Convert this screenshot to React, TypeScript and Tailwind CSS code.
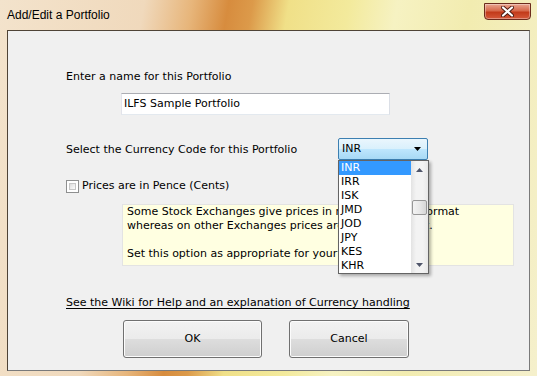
import React from "react";

const currencies = ["INR", "IRR", "ISK", "JMD", "JOD", "JPY", "KES", "KHR"];

const CloseButton: React.FC = () => (
  <div className="mt-[3px] mr-[6px] flex h-[17px] w-[47px] items-center justify-center rounded-b-[4px] border border-[#6b2b1c] bg-[linear-gradient(180deg,#e9a690_0%,#d6694b_45%,#c23a1a_55%,#d5593a_100%)] shadow-[inset_0_0_0_1px_rgba(255,255,255,0.35)]">
    <svg width="13" height="11" viewBox="0 0 13 11">
      <path d="M2 1.5 L11 9.5 M11 1.5 L2 9.5" stroke="#4a1a10" strokeWidth="4" strokeLinecap="round" />
      <path d="M2 1.5 L11 9.5 M11 1.5 L2 9.5" stroke="#ffffff" strokeWidth="2.2" strokeLinecap="round" />
    </svg>
  </div>
);

const Win7Button: React.FC<{ label: string; className?: string }> = ({ label, className = "" }) => (
  <div
    className={`flex h-[38px] items-center justify-center rounded-[3px] border border-[#707070] bg-[linear-gradient(180deg,#f2f2f2_0%,#ebebeb_50%,#dddddd_51%,#cfcfcf_100%)] shadow-[inset_0_0_0_1px_#fcfcfc] ${className}`}
  >
    <span className="text-[11px] leading-[14px] text-black">{label}</span>
  </div>
);

const ScrollArrow: React.FC<{ up?: boolean }> = ({ up }) => (
  <div className="flex h-[17px] w-full items-center justify-center">
    <svg width="7" height="4" viewBox="0 0 7 4">
      {up ? <path d="M0 4 L3.5 0 L7 4 Z" fill="#50566a" /> : <path d="M0 0 L3.5 4 L7 0 Z" fill="#50566a" />}
    </svg>
  </div>
);

const CurrencySelect: React.FC = () => (
  <div className="relative h-[22px] w-[90px]">
    <div className="flex h-full w-full items-center justify-between rounded-[2px] border border-[#3c7fb1] bg-[linear-gradient(180deg,#eaf6fd_0%,#d9f0fc_50%,#bee6fd_51%,#a7d9f5_100%)] pl-[3px] pr-[6px]">
      <span className="text-[11px] leading-[14px] text-black">INR</span>
      <svg width="7" height="4" viewBox="0 0 7 4">
        <path d="M0 0 L3.5 4 L7 0 Z" fill="#000" />
      </svg>
    </div>
    {/* open dropdown list */}
    <div className="absolute left-0 top-[22px] z-10 flex h-[114px] w-[91px] border border-[#646464] bg-white shadow-[2px_2px_3px_rgba(0,0,0,0.3)]">
      <div className="flex w-[73px] flex-col">
        {currencies.map((c, i) => (
          <div
            key={c}
            className={`h-[14px] pl-[2px] text-[11px] leading-[14px] ${i === 0 ? "bg-[#3399ff] text-white" : "text-black"}`}
          >
            {c}
          </div>
        ))}
      </div>
      <div className="flex w-[17px] flex-col items-center bg-[linear-gradient(90deg,#e3e3e3_0%,#f3f3f3_30%,#f3f3f3_70%,#e8e8e8_100%)]">
        <ScrollArrow up />
        <div className="mt-[22px] h-[15px] w-[15px] rounded-[2px] border border-[#979797] bg-[linear-gradient(90deg,#f3f3f3_0%,#e8e8e8_50%,#d6d6d6_100%)]" />
        <div className="flex-1" />
        <ScrollArrow />
      </div>
    </div>
  </div>
);

const App: React.FC = () => {
  return (
    <div className="relative h-[376px] w-[537px] overflow-hidden bg-[linear-gradient(100deg,#f3e3cc_0%,#f0d9bc_24%,#e7b57a_32%,#d78c3e_38%,#dc9a4a_42%,#f0e088_48%,#f3ea9c_58%,#f6f2c2_66%,#f2ecb0_78%,#f5f0cc_100%)]">
      {/* title bar */}
      <div className="flex h-[30px] items-start justify-between">
        <span className="pl-[7px] pt-[8px] font-['Liberation_Sans',sans-serif] text-[12px] leading-[14px] text-black">
          Add/Edit a Portfolio
        </span>
        <CloseButton />
      </div>

      {/* client area */}
      <div className="ml-[7px] h-[341px] w-[523px] border border-t-[#4f4336] border-l-[#4f4336] border-r-[#7a7a7a] border-b-[#7a7a7a] bg-[#f0f0f0] font-['DejaVu_Sans',sans-serif] text-[11px] leading-[14px] text-black">
        <div className="flex flex-col pt-[39px]">
          <div className="pl-[58px]">Enter a name for this Portfolio</div>

          <div className="ml-[113px] mt-[9px] flex h-[22px] w-[269px] items-center border border-[#abadb3] border-b-[#e3e9ef] border-l-[#e2e3ea] border-r-[#dbdfe6] bg-white pl-[2px]">
            ILFS Sample Portfolio
          </div>

          <div className="mt-[23px] flex h-[22px] items-center">
            <div className="w-[330px] pl-[58px] pt-[1px]">Select the Currency Code for this Portfolio</div>
            <CurrencySelect />
          </div>

          <div className="mt-[19px] flex items-center pl-[58px]">
            <div className="h-[13px] w-[13px] border border-[#8e8f8f] bg-white p-[2px]">
              <div className="h-full w-full border border-[#c6c6c6] bg-[linear-gradient(135deg,#dcdcdc_0%,#f0f0f0_60%,#fbfbfb_100%)]" />
            </div>
            <span className="ml-[3px]">Prices are in Pence (Cents)</span>
          </div>

          <div className="ml-[114px] mt-[11px] h-[62px] w-[392px] border border-[#e3e3e3] bg-[#ffffe1] pl-[4px]">
            <div>Some Stock Exchanges give prices in minor currency format</div>
            <div>whereas on other Exchanges prices are in decimal unit.</div>
            <div>&nbsp;</div>
            <div>Set this option as appropriate for your Exchange.</div>
          </div>

          <div className="mt-[30px] pl-[58px]">
            <span className="underline underline-offset-2">
              See the Wiki for Help and an explanation of Currency handling
            </span>
          </div>

          <div className="ml-[115px] mt-[10px] flex gap-[27px]">
            <Win7Button label="OK" className="w-[139px]" />
            <Win7Button label="Cancel" className="w-[120px]" />
          </div>
        </div>
      </div>
    </div>
  );
};

export default App;
